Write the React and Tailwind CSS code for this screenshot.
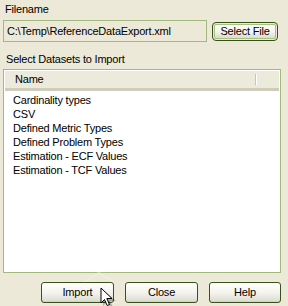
const datasets = [
  "Cardinality types",
  "CSV",
  "Defined Metric Types",
  "Defined Problem Types",
  "Estimation - ECF Values",
  "Estimation - TCF Values",
];

const font = { fontFamily: '"Liberation Sans", Arial, sans-serif' };

const XpButton = ({ children, className = "" }) => (
  <button
    className={`flex items-center justify-center rounded-[3px] border border-[#37521a] bg-gradient-to-b from-[#ffffff] via-[#f4f3ee] to-[#dcdbd0] text-[11px] leading-none text-black shadow-[inset_0_-1px_0_#d6d0c2] ${className}`}
  >
    {children}
  </button>
);

const Cursor = () => (
  <svg
    className="absolute left-[100px] top-[287px]"
    width="20"
    height="22"
    viewBox="0 0 20 22"
  >
    <path d="M3 3v16l4-4 3 6 3-1-3-6h6z" fill="#000" opacity="0.25" />
    <path
      d="M1 1v15l3.5-3.5 2.7 6 2.3-1-2.7-6h5.2z"
      fill="#fff"
      stroke="#000"
      strokeWidth="1"
      strokeLinejoin="miter"
    />
  </svg>
);

export default function App() {
  return (
    <div
      className="relative w-[288px] h-[306px] overflow-hidden bg-[#ece9d8] text-[11px] tracking-[-0.2px] text-black"
      style={font}
    >
      <div className="pt-[3px] pl-[5px] leading-[13px]">Filename</div>

      <div className="mt-[4px] flex items-center">
        <div className="ml-[3px] flex h-[22px] w-[204px] items-center border border-[#a4b97f] bg-[#ece9d8] pl-[3px] leading-none">
          C:\Temp\ReferenceDataExport.xml
        </div>
        <div className="ml-[5px] rounded-[4px] border border-[#37521a] p-[1px]">
          <div className="flex h-[15px] w-[62px] items-center justify-center rounded-[2px] border border-[#a9c07a] bg-gradient-to-b from-[#ffffff] via-[#f4f3ee] to-[#dcdbd0] leading-none">
            Select File
          </div>
        </div>
      </div>

      <div className="mt-[11px] pl-[6px] leading-[13px]">
        Select Datasets to Import
      </div>

      <div className="mt-[3px] ml-[3px] h-[204px] w-[278px] border border-[#a4b97f] bg-white p-[1px]">
        <div className="flex h-[20px] bg-[#ebeadb] border-b-[3px] border-[#d0ccbc]">
          <div className="flex w-[250px] items-center pl-[10px] leading-none">
            Name
          </div>
          <div className="my-[3px] flex">
            <div className="w-px bg-[#c7c5b2]" />
            <div className="w-px bg-white" />
          </div>
        </div>
        <div className="mt-[2px]">
          {datasets.map((name) => (
            <div key={name} className="h-[14px] pl-[8px] leading-[14px]">
              {name}
            </div>
          ))}
        </div>
      </div>

      <div className="mt-[9px] flex pl-[41px] gap-[11px]">
        <XpButton className="h-[21px] w-[73px]">Import</XpButton>
        <XpButton className="h-[21px] w-[73px]">Close</XpButton>
        <XpButton className="h-[21px] w-[72px]">Help</XpButton>
      </div>

      <svg
        className="absolute left-[82px] top-[262px]"
        width="34"
        height="22"
        viewBox="0 0 34 22"
      >
        <path d="M2 2L32 20M32 2L2 20" stroke="#fff" strokeWidth="1" opacity="0.45" />
      </svg>
      <Cursor />
    </div>
  );
}
